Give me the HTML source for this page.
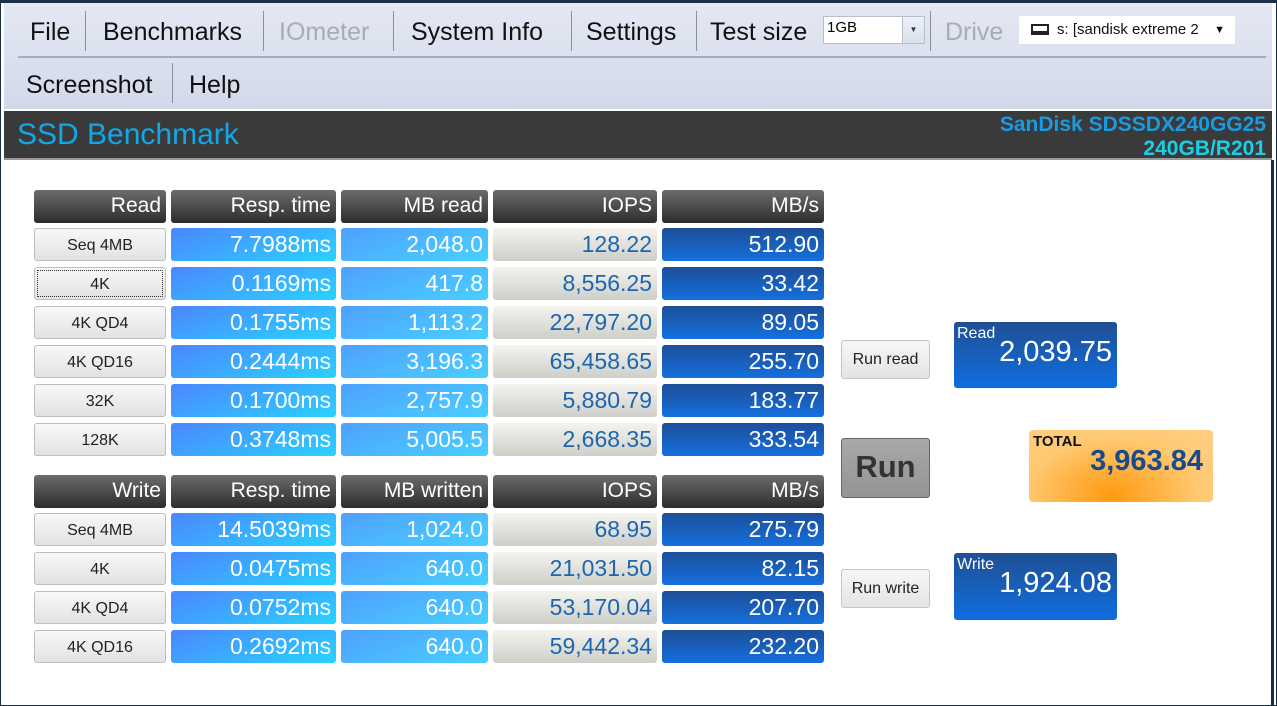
<!DOCTYPE html>
<html><head><meta charset="utf-8"><style>
*{margin:0;padding:0;box-sizing:border-box}
body{width:1277px;height:706px;overflow:hidden;background:#fff;font-family:"Liberation Sans",sans-serif;position:relative}
.frame{position:absolute;left:0;top:0;width:1277px;height:706px;border:1px solid #1c2f4a;border-top:3px solid #1c2f4a}
.menu{position:absolute;left:4px;top:3px;width:1268px;height:106px;background:linear-gradient(#e4e8f3,#d3d9ea);}
.mi{position:absolute;font-size:25px;color:#111;top:15px;font-family:"Liberation Sans",sans-serif;}
.sep{position:absolute;width:1px;background:#8a8f9a;height:40px}
.hline{position:absolute;left:14px;right:6px;top:53px;height:2px;background:#a6acb8}
.title{position:absolute;left:4px;top:111px;width:1268px;height:49px;background:#3a3a3a;border-bottom:2px solid #999}
.c{position:absolute;height:33px;border-radius:3px;color:#fff;font-size:23px;text-align:right;padding-right:5px;line-height:33px}
.h{background:linear-gradient(#6d6d6d,#2c2c2c);color:#fff;font-size:21px;line-height:32px}
.lb{background:linear-gradient(#f8f8f8,#e2e2e2);border:1px solid #bdbdbd;color:#222;font-size:16px;text-align:center;padding:0}
.r{background:linear-gradient(160deg,#4c86ff,#29d2ff)}
.m{background:linear-gradient(160deg,#4fa0ff,#48d0ff)}
.i{background:linear-gradient(#f4f3ee,#cfcfca);color:#1a66b2}
.s{background:linear-gradient(#1d4e98,#1470de)}
.btn{position:absolute;background:linear-gradient(#f7f7f7,#e4e4e4);border:1px solid #c4c4c4;border-radius:3px;font-size:16px;color:#222;text-align:center}
.box{position:absolute;border-radius:3px;background:linear-gradient(#1f4f94,#106ee0);color:#fff}
</style></head><body>
<div class="menu">
<div class="mi" style="left:26px">File</div><div class="sep" style="left:81px;top:8px"></div>
<div class="mi" style="left:99px">Benchmarks</div><div class="sep" style="left:259px;top:8px"></div>
<div class="mi" style="left:275px;color:#a8acb4">IOmeter</div><div class="sep" style="left:389px;top:8px"></div>
<div class="mi" style="left:407px">System Info</div><div class="sep" style="left:567px;top:8px"></div>
<div class="mi" style="left:582px">Settings</div><div class="sep" style="left:692px;top:8px"></div>
<div class="mi" style="left:706px">Test size</div>
<div style="position:absolute;left:819px;top:13px;width:102px;height:28px;background:#fff;border:1px solid #b8c0cc;font-size:15px;padding:2px 3px">1GB<div style="position:absolute;right:0;top:0;width:22px;height:26px;background:linear-gradient(#eef2f8,#d8e0ec);border-left:1px solid #b8c0cc;font-size:8px;color:#334;text-align:center;line-height:26px">▼</div></div>
<div class="sep" style="left:926px;top:8px"></div>
<div class="mi" style="left:941px;color:#a8acb4">Drive</div>
<div style="position:absolute;left:1015px;top:13px;width:216px;height:28px;background:#fff;font-size:15px;line-height:28px;padding-left:38px;color:#111">s: [sandisk extreme 2<span style="position:absolute;left:12px;top:8px;width:18px;height:11px;border:2px solid #222;border-bottom-width:4px"></span><span style="position:absolute;right:10px;font-size:11px">▼</span></div>
<div class="hline"></div>
<div class="mi" style="left:22px;top:68px">Screenshot</div><div class="sep" style="left:168px;top:60px"></div>
<div class="mi" style="left:185px;top:68px">Help</div>
</div>
<div class="title">
<div style="position:absolute;left:13px;top:7px;font-size:30px;color:#11a8e8;font-family:'Liberation Sans',sans-serif">SSD Benchmark</div>
<div style="position:absolute;right:6px;top:2px;text-align:right;font-size:21px;font-weight:bold;line-height:24px"><span style="color:#1a9ae0">SanDisk SDSSDX240GG25</span><br><span style="color:#1ad0e8">240GB/R201</span></div>
</div>

<div class="c h" style="left:34px;top:190px;width:132px">Read</div>
<div class="c h" style="left:171px;top:190px;width:165px">Resp. time</div>
<div class="c h" style="left:341px;top:190px;width:147px">MB read</div>
<div class="c h" style="left:493px;top:190px;width:164px">IOPS</div>
<div class="c h" style="left:662px;top:190px;width:162px">MB/s</div>

<div class="c lb" style="left:34px;top:228px;width:132px">Seq 4MB</div><div class="c r" style="left:171px;top:228px;width:165px">7.7988ms</div><div class="c m" style="left:341px;top:228px;width:147px">2,048.0</div><div class="c i" style="left:493px;top:228px;width:164px">128.22</div><div class="c s" style="left:662px;top:228px;width:162px">512.90</div>
<div class="c lb" style="left:34px;top:267px;width:132px;outline:1px dotted #333;outline-offset:-4px">4K</div><div class="c r" style="left:171px;top:267px;width:165px">0.1169ms</div><div class="c m" style="left:341px;top:267px;width:147px">417.8</div><div class="c i" style="left:493px;top:267px;width:164px">8,556.25</div><div class="c s" style="left:662px;top:267px;width:162px">33.42</div>
<div class="c lb" style="left:34px;top:306px;width:132px">4K QD4</div><div class="c r" style="left:171px;top:306px;width:165px">0.1755ms</div><div class="c m" style="left:341px;top:306px;width:147px">1,113.2</div><div class="c i" style="left:493px;top:306px;width:164px">22,797.20</div><div class="c s" style="left:662px;top:306px;width:162px">89.05</div>
<div class="c lb" style="left:34px;top:345px;width:132px">4K QD16</div><div class="c r" style="left:171px;top:345px;width:165px">0.2444ms</div><div class="c m" style="left:341px;top:345px;width:147px">3,196.3</div><div class="c i" style="left:493px;top:345px;width:164px">65,458.65</div><div class="c s" style="left:662px;top:345px;width:162px">255.70</div>
<div class="c lb" style="left:34px;top:384px;width:132px">32K</div><div class="c r" style="left:171px;top:384px;width:165px">0.1700ms</div><div class="c m" style="left:341px;top:384px;width:147px">2,757.9</div><div class="c i" style="left:493px;top:384px;width:164px">5,880.79</div><div class="c s" style="left:662px;top:384px;width:162px">183.77</div>
<div class="c lb" style="left:34px;top:423px;width:132px">128K</div><div class="c r" style="left:171px;top:423px;width:165px">0.3748ms</div><div class="c m" style="left:341px;top:423px;width:147px">5,005.5</div><div class="c i" style="left:493px;top:423px;width:164px">2,668.35</div><div class="c s" style="left:662px;top:423px;width:162px">333.54</div>

<div class="c h" style="left:34px;top:475px;width:132px">Write</div>
<div class="c h" style="left:171px;top:475px;width:165px">Resp. time</div>
<div class="c h" style="left:341px;top:475px;width:147px">MB written</div>
<div class="c h" style="left:493px;top:475px;width:164px">IOPS</div>
<div class="c h" style="left:662px;top:475px;width:162px">MB/s</div>

<div class="c lb" style="left:34px;top:513px;width:132px">Seq 4MB</div><div class="c r" style="left:171px;top:513px;width:165px">14.5039ms</div><div class="c m" style="left:341px;top:513px;width:147px">1,024.0</div><div class="c i" style="left:493px;top:513px;width:164px">68.95</div><div class="c s" style="left:662px;top:513px;width:162px">275.79</div>
<div class="c lb" style="left:34px;top:552px;width:132px">4K</div><div class="c r" style="left:171px;top:552px;width:165px">0.0475ms</div><div class="c m" style="left:341px;top:552px;width:147px">640.0</div><div class="c i" style="left:493px;top:552px;width:164px">21,031.50</div><div class="c s" style="left:662px;top:552px;width:162px">82.15</div>
<div class="c lb" style="left:34px;top:591px;width:132px">4K QD4</div><div class="c r" style="left:171px;top:591px;width:165px">0.0752ms</div><div class="c m" style="left:341px;top:591px;width:147px">640.0</div><div class="c i" style="left:493px;top:591px;width:164px">53,170.04</div><div class="c s" style="left:662px;top:591px;width:162px">207.70</div>
<div class="c lb" style="left:34px;top:630px;width:132px">4K QD16</div><div class="c r" style="left:171px;top:630px;width:165px">0.2692ms</div><div class="c m" style="left:341px;top:630px;width:147px">640.0</div><div class="c i" style="left:493px;top:630px;width:164px">59,442.34</div><div class="c s" style="left:662px;top:630px;width:162px">232.20</div>

<div class="btn" style="left:841px;top:340px;width:89px;height:39px;line-height:37px">Run read</div>
<div class="btn" style="left:841px;top:438px;width:89px;height:60px;line-height:56px;background:linear-gradient(#a8a8a8,#949494);border-color:#666;font-size:31px;font-weight:bold;color:#333">Run</div>
<div class="btn" style="left:841px;top:569px;width:89px;height:39px;line-height:37px">Run write</div>

<div class="box" style="left:954px;top:322px;width:163px;height:66px"><div style="position:absolute;left:3px;top:3px;font-size:16px">Read</div><div style="position:absolute;right:5px;top:14px;font-size:29px">2,039.75</div></div>
<div class="box" style="left:954px;top:553px;width:163px;height:67px"><div style="position:absolute;left:3px;top:3px;font-size:16px">Write</div><div style="position:absolute;right:5px;top:14px;font-size:29px">1,924.08</div></div>
<div style="position:absolute;left:1029px;top:430px;width:184px;height:72px;border-radius:4px;background:radial-gradient(ellipse at 45% 90%,#ff9a10,#ffc870 60%,#ffd088)">
<div style="position:absolute;left:4px;top:3px;font-size:15px;font-weight:bold;color:#111">TOTAL</div>
<div style="position:absolute;right:10px;top:15px;font-size:29px;font-weight:bold;color:#1a4a8a">3,963.84</div></div>
<div class="frame"></div>
<div style="position:absolute;left:1271px;top:160px;width:3px;height:546px;background:#1c2f4a"></div>
</body></html>
